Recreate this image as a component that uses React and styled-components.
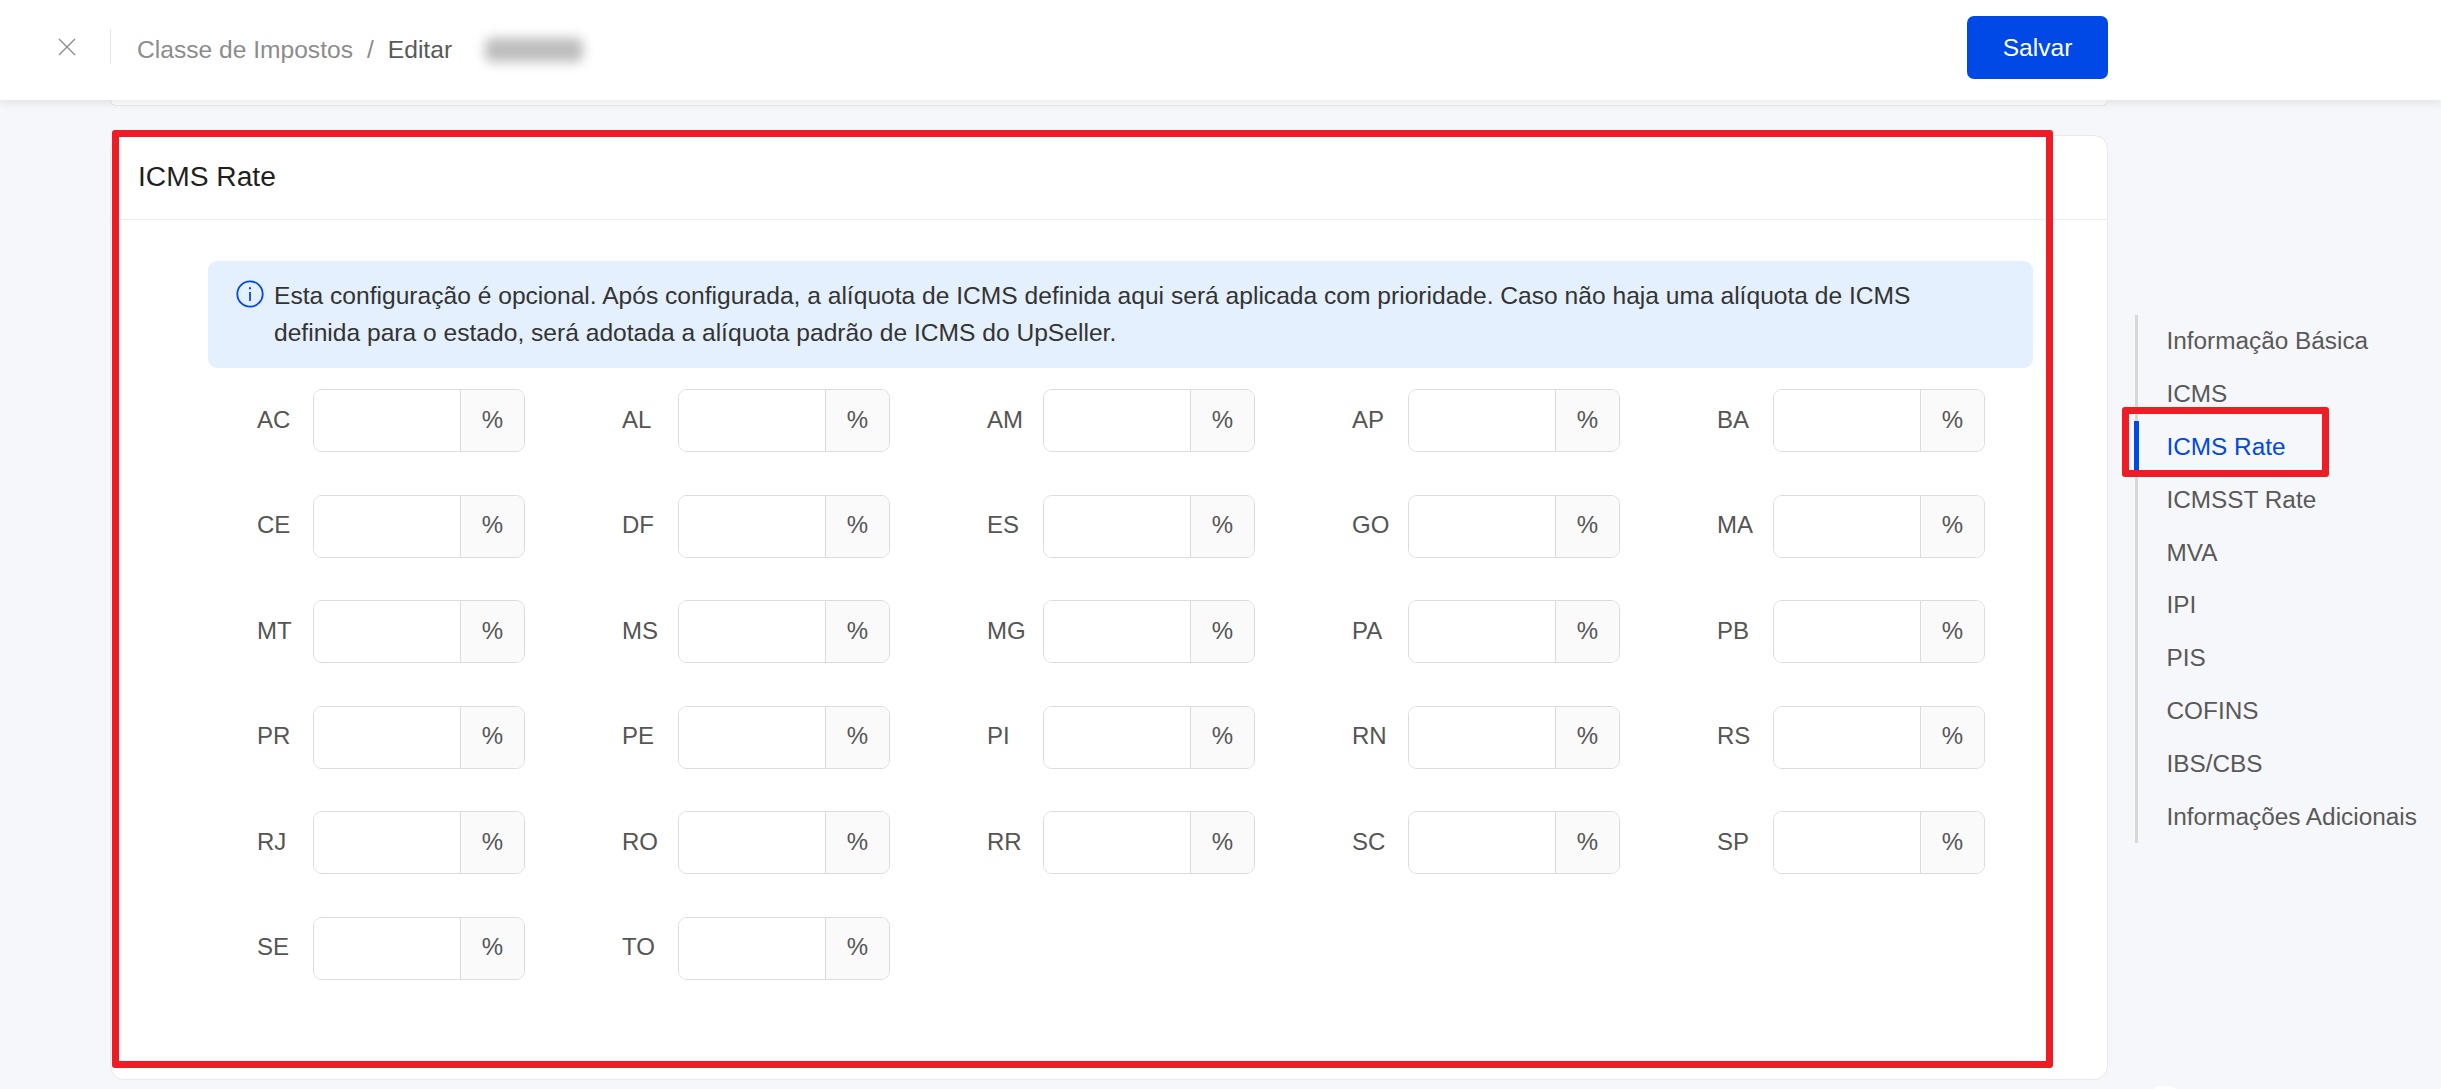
import React from "react";
import styled, { createGlobalStyle } from "styled-components";

const Global = createGlobalStyle`
  html, body { margin: 0; padding: 0; background: #f6f7fa; }
  body { font-family: "Liberation Sans", Arial, sans-serif; color: #555; overflow: hidden; }
  * { box-sizing: border-box; }
`;

const Page = styled.div`
  position: relative;
  width: 2441px;
  height: 1089px;
  overflow: hidden;
  background: #f6f7fa;
`;

const Header = styled.header`
  position: relative;
  z-index: 2;
  height: 100px;
  display: flex;
  align-items: center;
  background: #fff;
  box-shadow: 0 2px 10px rgba(0, 0, 0, 0.1);
  padding: 0 333px 0 58px;
`;

const CloseButton = styled.button`
  width: 18px;
  height: 18px;
  padding: 0;
  border: 0;
  background: none;
  color: #8a8a8a;
  display: flex;
  margin-top: -7px;
`;

const HeaderDivider = styled.span`
  width: 1px;
  height: 35px;
  margin: -7px 26px 0 34px;
  background: #e6e6e6;
`;

const Crumbs = styled.nav`
  display: flex;
  align-items: center;
  font-size: 24.6px;
  color: #8c8c8c;
  flex: 1;
`;

const CrumbSep = styled.span`
  margin: 0 14px;
`;

const CrumbCurrent = styled.span`
  color: #595959;
`;

const Blurred = styled.span`
  width: 98px;
  height: 24px;
  margin-left: 33px;
  background: #bdbdbd;
  border-radius: 6px;
  filter: blur(6px);
`;

const SaveButton = styled.button`
  width: 141px;
  height: 63px;
  margin-top: -5px;
  border: 0;
  border-radius: 7px;
  background: #0049e6;
  color: #fff;
  font: 24.6px "Liberation Sans", Arial, sans-serif;
`;

const Body = styled.div`
  display: flex;
  padding-left: 110px;
  align-items: flex-start;
`;

const Main = styled.main`
  width: 1998px;
  flex: none;
`;

const PrevCardEnd = styled.div`
  height: 6px;
  background: #fff;
  border: 1px solid #e9e9ec;
  border-top: 0;
  border-radius: 0 0 14px 14px;
`;

const Card = styled.section`
  margin-top: 29px;
  height: 945px;
  background: #fff;
  border: 1px solid #e9e9ec;
  border-radius: 14px;
`;

const CardTitle = styled.h2`
  margin: 0;
  height: 84px;
  padding: 0 27px 3px;
  display: flex;
  align-items: center;
  font-size: 28.2px;
  font-weight: 400;
  color: #1f1f1f;
  border-bottom: 1px solid #efefef;
`;

const CardBody = styled.div`
  padding: 41px 74px 0 97px;
`;

const Alert = styled.div`
  display: flex;
  gap: 10px;
  height: 107px;
  padding: 16px 27px 0 28px;
  background: #e4f0fd;
  border-radius: 9px;
  font-size: 24.6px;
  line-height: 37px;
  color: #333;
`;

const AlertIcon = styled.svg`
  flex: none;
  width: 28px;
  height: 28px;
  margin-top: 3px;
  color: #0049e6;
`;

const AlertText = styled.p`
  margin: 0;
  max-width: 1670px;
`;

const Grid = styled.div`
  display: grid;
  grid-template-columns: repeat(5, 365px);
  row-gap: 42.6px;
  margin-top: 21px;
`;

const Field = styled.label`
  display: flex;
  align-items: center;
  height: 63px;
  padding-left: 49px;
`;

const FieldLabel = styled.span`
  width: 56px;
  padding-bottom: 2px;
  font-size: 24px;
  color: #555;
`;

const InputGroup = styled.div`
  display: flex;
  width: 212px;
  height: 63px;
  border: 1px solid #dcdcdc;
  border-radius: 9px;
  overflow: hidden;
`;

const Input = styled.input`
  width: 146px;
  min-width: 0;
  border: 0;
  outline: 0;
  background: #fff;
`;

const Addon = styled.span`
  flex: 1;
  display: flex;
  align-items: center;
  justify-content: center;
  padding-bottom: 2px;
  background: #fafafa;
  border-left: 1px solid #dcdcdc;
  font-size: 24px;
  color: #555;
`;

const SideNav = styled.ul`
  list-style: none;
  margin: 215px 0 0 27px;
  padding: 0;
  border-left: 3px solid #d8d8d8;
`;

const NavItem = styled.li`
  position: relative;
  height: 52.8px;
  display: flex;
  align-items: center;
  padding-left: 28.5px;
  font-size: 24.35px;
  white-space: nowrap;
  color: ${(p) => (p.$active ? "#0049e6" : "#595959")};
  ${(p) =>
    p.$active &&
    `&::before {
      content: "";
      position: absolute;
      left: -4px;
      top: 0;
      bottom: 0;
      width: 5px;
      background: #0049e6;
    }`}
`;

const Annotation = styled.div`
  position: absolute;
  z-index: 3;
  border: 7px solid #ee1c25;
  border-radius: 3px;
  pointer-events: none;
`;

const MainAnnotation = styled(Annotation)`
  left: 112px;
  top: 130px;
  width: 1941px;
  height: 938px;
`;

const NavAnnotation = styled(Annotation)`
  left: 2122px;
  top: 407px;
  width: 207px;
  height: 70px;
`;

const BackToTop = styled.div`
  position: absolute;
  left: 2141px;
  top: 1086px;
  width: 48px;
  height: 48px;
  border-radius: 50%;
  background: #fff;
`;

const states = [
  "AC","AL","AM","AP","BA","CE","DF","ES","GO","MA","MT","MS","MG","PA","PB",
  "PR","PE","PI","RN","RS","RJ","RO","RR","SC","SP","SE","TO",
];

const navItems = [
  "Informação Básica","ICMS","ICMS Rate","ICMSST Rate","MVA","IPI","PIS","COFINS","IBS/CBS","Informações Adicionais",
];

export default function App() {
  return (
    <Page>
      <Global />
      <Header>
        <CloseButton aria-label="Fechar">
          <svg viewBox="0 0 18 18" width="18" height="18" fill="none" stroke="currentColor" strokeWidth="1.3">
            <path d="M1 1 L17 17 M17 1 L1 17" />
          </svg>
        </CloseButton>
        <HeaderDivider />
        <Crumbs>
          <span>Classe de Impostos</span>
          <CrumbSep>/</CrumbSep>
          <CrumbCurrent>Editar</CrumbCurrent>
          <Blurred />
        </Crumbs>
        <SaveButton>Salvar</SaveButton>
      </Header>
      <Body>
        <Main>
          <PrevCardEnd />
          <Card>
            <CardTitle>ICMS Rate</CardTitle>
            <CardBody>
              <Alert>
                <AlertIcon viewBox="0 0 28 28" fill="none" stroke="currentColor">
                  <circle cx="14" cy="14" r="12.7" strokeWidth="1.8" />
                  <path d="M14 12 V21" strokeWidth="1.8" />
                  <path d="M14 7.2 V9.2" strokeWidth="2" />
                </AlertIcon>
                <AlertText>
                  Esta configuração é opcional. Após configurada, a alíquota de ICMS definida aqui será aplicada com prioridade. Caso não haja uma alíquota de ICMS definida para o estado, será adotada a alíquota padrão de ICMS do UpSeller.
                </AlertText>
              </Alert>
              <Grid>
                {states.map((s) => (
                  <Field key={s}>
                    <FieldLabel>{s}</FieldLabel>
                    <InputGroup>
                      <Input aria-label={s} />
                      <Addon>%</Addon>
                    </InputGroup>
                  </Field>
                ))}
              </Grid>
            </CardBody>
          </Card>
        </Main>
        <SideNav>
          {navItems.map((n) => (
            <NavItem key={n} $active={n === "ICMS Rate"}>{n}</NavItem>
          ))}
        </SideNav>
      </Body>
      <MainAnnotation />
      <NavAnnotation />
      <BackToTop />
    </Page>
  );
}
